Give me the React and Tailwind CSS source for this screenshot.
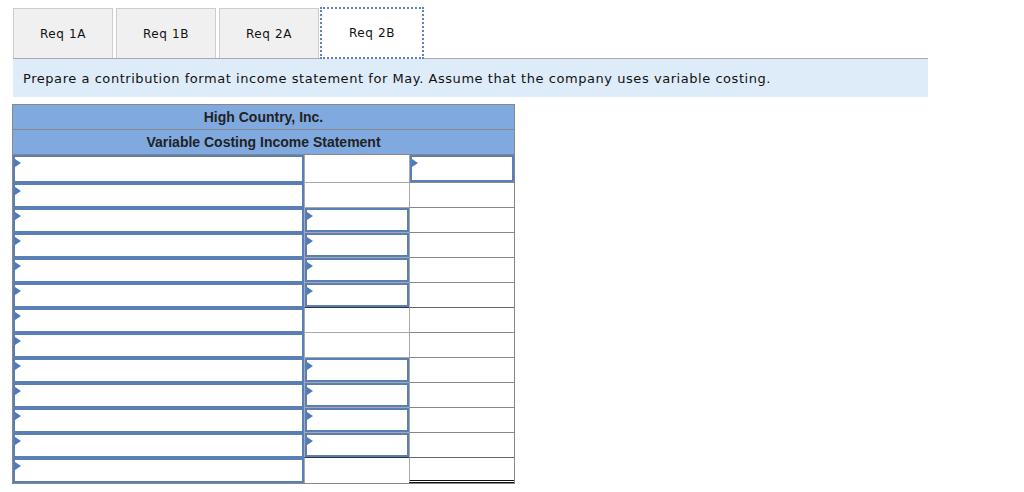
import React from "react";

const rows = [
  { h: "h-[28px]", c: ["in", "", "in"] },
  { c: ["in", "", ""] },
  { c: ["in", "in", ""] },
  { c: ["in", "in", ""] },
  { c: ["in", "in", ""] },
  { c: ["in", "in", ""], line: "single" },
  { c: ["in", "", ""] },
  { c: ["in", "", ""] },
  { c: ["in", "in", ""] },
  { c: ["in", "in", ""] },
  { c: ["in", "in", ""] },
  { c: ["in", "in", ""], line: "single" },
  { c: ["in", "", ""], line: "double" },
];

function InputBox() {
  return (
    <div className="relative h-full w-full border-2 border-[#5a7fb6] bg-white">
      <span className="absolute left-0 top-[2px] h-0 w-0 border-y-[4px] border-l-[6px] border-y-transparent border-l-[#4d79bd]" />
    </div>
  );
}

export default function App() {
  const tabs = ["Req 1A", "Req 1B", "Req 2A"];
  return (
    <div className="min-h-screen w-[1024px] bg-white pl-[13px] pt-[8px]" style={{ fontFamily: '"DejaVu Sans", Verdana, sans-serif' }}>
      <div className="flex w-[915px] items-end border-b border-[#aaaaaa]">
        {tabs.map((t) => (
          <div
            key={t}
            className="mr-[3px] flex h-[50px] w-[100px] items-center justify-center border border-b-0 border-[#cccccc] bg-[#f0f0f0] text-[12px] tracking-[0.6px] text-[#111]"
          >
            {t}
          </div>
        ))}
        <div className="-mb-px -mt-[1px] ml-[-2px] flex h-[52px] w-[104px] items-center justify-center border-2 border-dotted border-[#5b83c4] bg-white text-[12px] tracking-[0.6px] text-[#111]">
          Req 2B
        </div>
      </div>
      <div className="flex h-[38px] w-[915px] items-center bg-[#deecf9] pl-[10px] pt-[2px] text-[13px] tracking-[0.55px] text-[#111]">
        Prepare a contribution format income statement for May. Assume that the company uses variable costing.
      </div>

      <div className="ml-[-1px] mt-[7px] w-[503px] border border-[#888888]" style={{ fontFamily: '"Liberation Sans", Arial, sans-serif' }}>
        <div className="flex h-[25px] items-center justify-center border-b border-[#888888] bg-[#80aadf] text-[14px] font-bold text-[#222]">
          High Country, Inc.
        </div>
        <div className="flex h-[25px] items-center justify-center border-b border-[#888888] bg-[#80aadf] text-[14px] font-bold text-[#222]">
          Variable Costing Income Statement
        </div>
        {rows.map((r, i) => (
          <div key={i} className={`flex ${r.h || "h-[25px]"}`}>
            <div className="w-[291px] shrink-0">
              <InputBox />
            </div>
            <div
              className={`w-[105px] shrink-0 border-l border-[#a8a8a8] ${
                r.line === "single" ? "border-b border-b-[#333]" : i === rows.length - 1 ? "" : "border-b border-b-[#a8a8a8]"
              }`}
            >
              {r.c[1] === "in" && <InputBox />}
            </div>
            <div
              className={`w-[105px] shrink-0 border-l border-[#a8a8a8] ${
                r.line === "single"
                  ? "border-b border-b-[#666]"
                  : r.line === "double"
                  ? "border-b-[3px] border-double border-b-[#111]"
                  : "border-b border-b-[#888]"
              }`}
            >
              {r.c[2] === "in" && <InputBox />}
            </div>
          </div>
        ))}
      </div>
    </div>
  );
}
